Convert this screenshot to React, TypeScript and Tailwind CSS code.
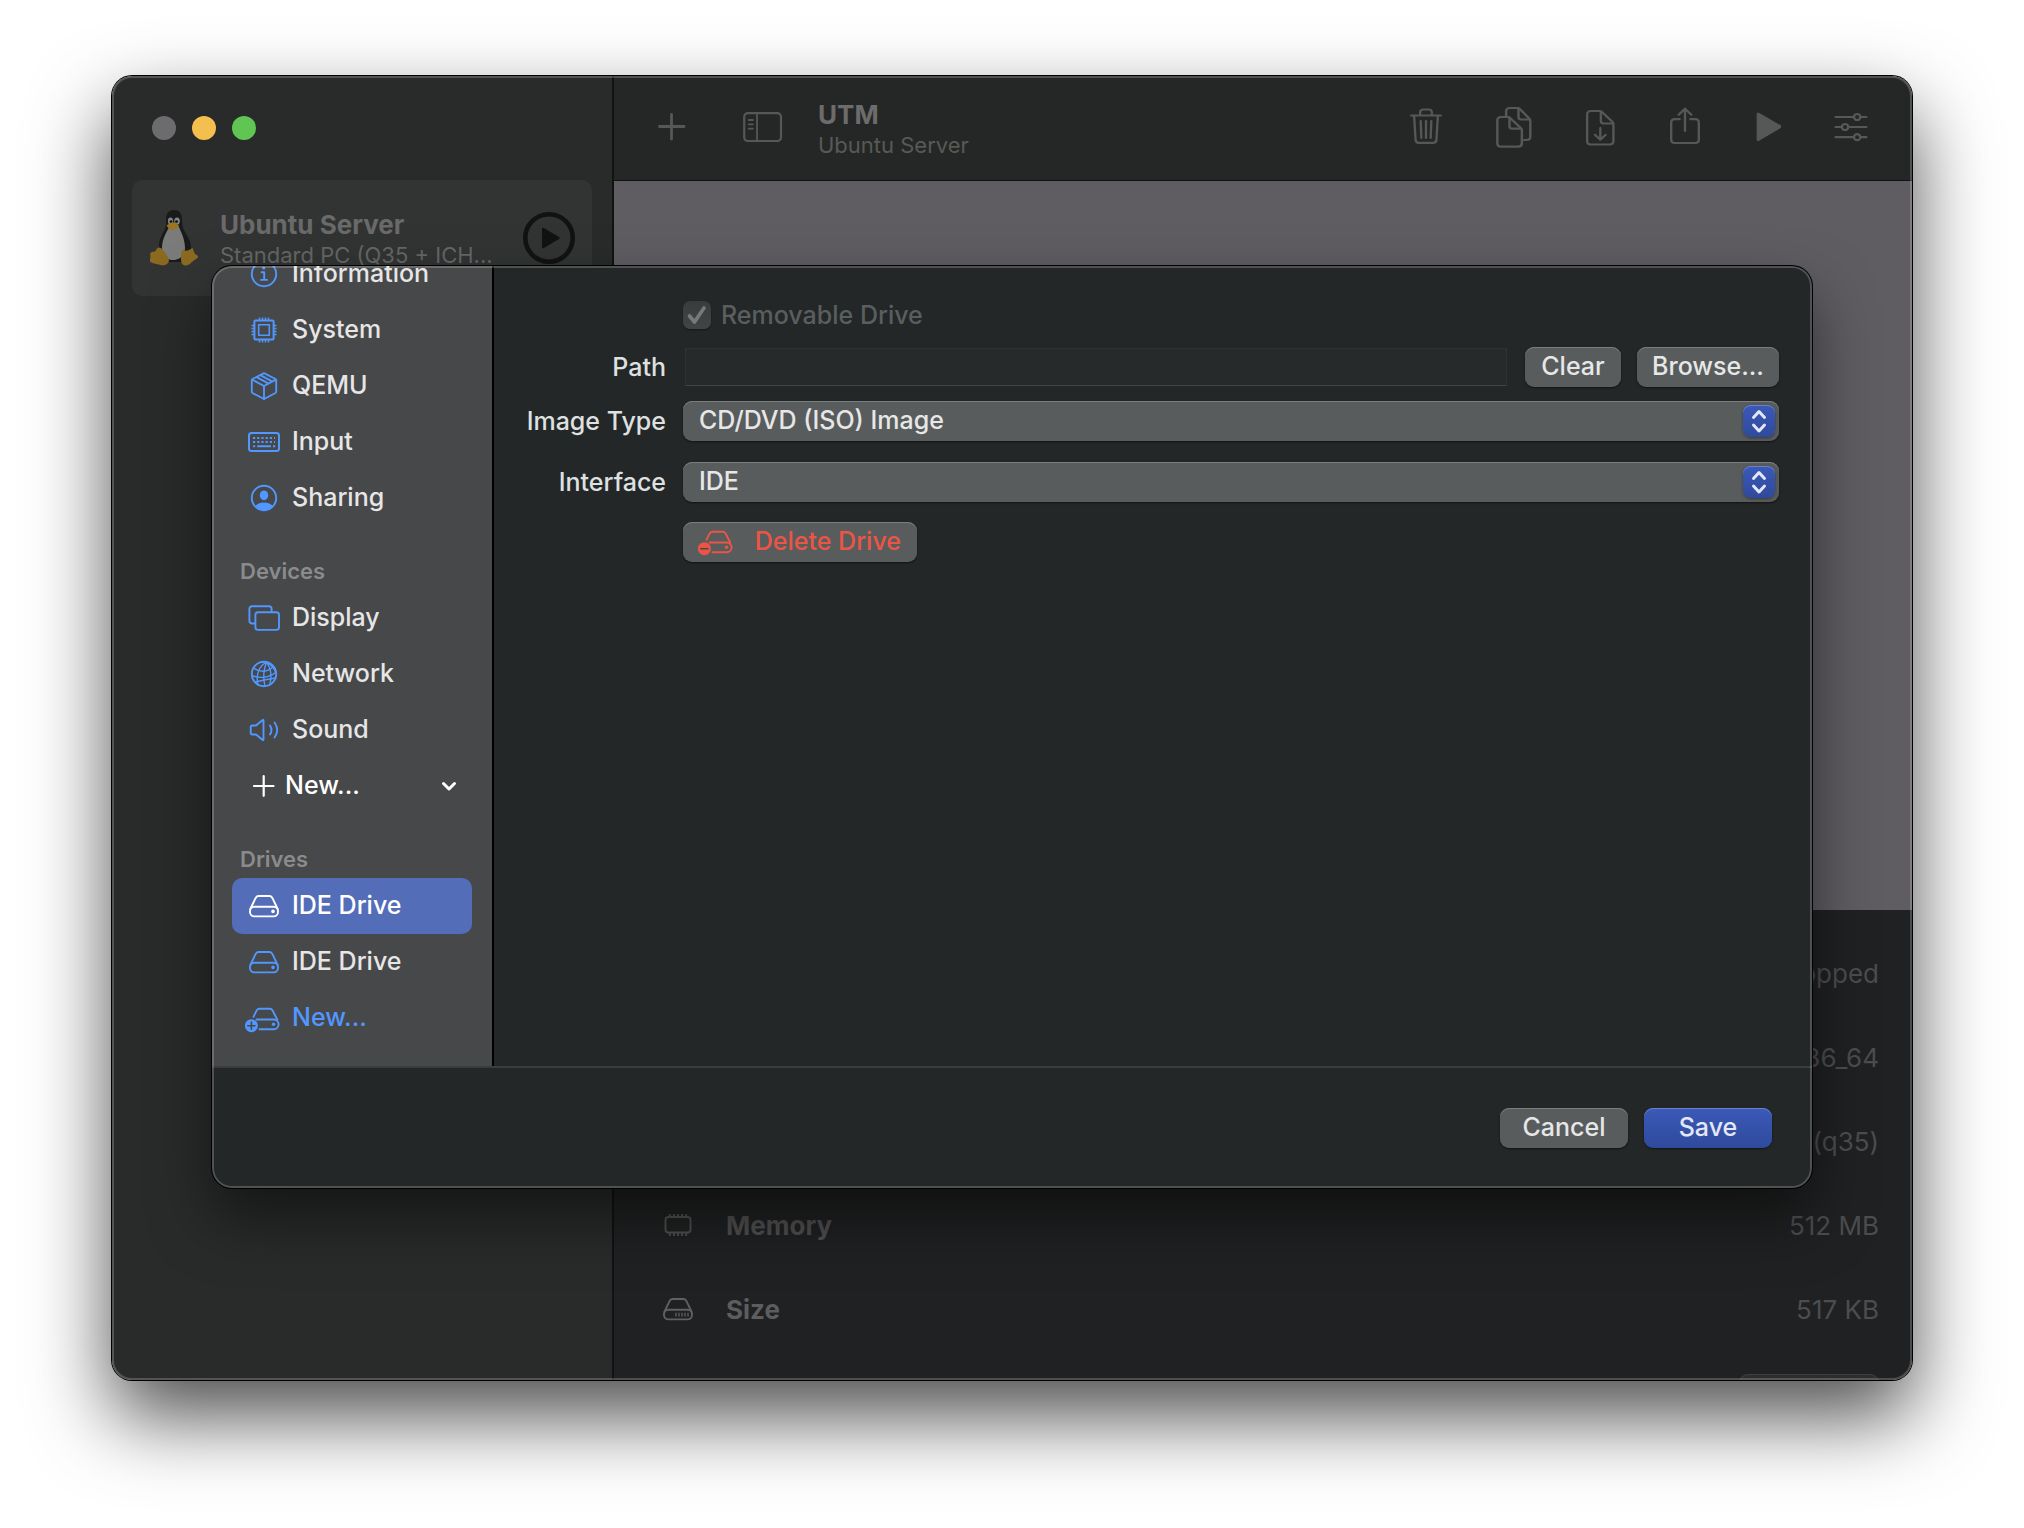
import { useState } from "react";
import type { ReactNode } from "react";

function Glyph({ children, className = "" }: { children: ReactNode; className?: string }) {
  return (
    <svg
      viewBox="0 0 36 32"
      className={`h-8 w-9 shrink-0 overflow-visible ${className}`}
      fill="none"
      stroke="currentColor"
      strokeWidth={1.9}
      strokeLinecap="round"
      strokeLinejoin="round"
      aria-hidden="true"
    >
      {children}
    </svg>
  );
}

function InfoIcon() {
  return (
    <Glyph className="text-[#5197ff]">
      <circle cx="18" cy="16" r="12.2" />
      <circle cx="17.7" cy="10" r="1.6" fill="currentColor" stroke="none" />
      <path d="M15.6 14.2h2.6v7.6M15 21.9h6.2" />
    </Glyph>
  );
}

function ChipIcon() {
  return (
    <Glyph className="text-[#5197ff]">
      <rect x="8.4" y="6.4" width="19.2" height="19.2" rx="1" strokeWidth={2} />
      <rect x="12.7" y="10.7" width="10.6" height="10.6" strokeWidth={1.6} />
      <path
        d="M13.5 3.5v3M16.5 3.5v3M19.5 3.5v3M22.5 3.5v3M13.5 25.5v3M16.5 25.5v3M19.5 25.5v3M22.5 25.5v3M5.5 11.5h3M5.5 14.5h3M5.5 17.5h3M5.5 20.5h3M27.5 11.5h3M27.5 14.5h3M27.5 17.5h3M27.5 20.5h3"
        strokeWidth={1.5}
        strokeLinecap="butt"
      />
    </Glyph>
  );
}

function BoxIcon() {
  return (
    <Glyph className="text-[#5197ff]">
      <path d="M18 3.2 29.5 9q.7.4.7 1.2v11.6q0 .8-.7 1.2L18 29 6.5 23q-.7-.4-.7-1.2V10.2q0-.8.7-1.2Z" />
      <path d="M6.2 9.7 18 16l11.8-6.3M18 16v13M10.6 7.2l11.6 6.2M14.4 5.2l11.6 6.2" />
    </Glyph>
  );
}

function KeyboardIcon() {
  return (
    <Glyph className="text-[#5197ff]">
      <rect x="3" y="7" width="30" height="18" rx="2.5" strokeWidth={2} />
      <path d="M7 12h22M7 16h22" strokeWidth={2} strokeDasharray="2.2 2" strokeLinecap="butt" />
      <path d="M7 20.2h2.2M11.2 20.2h13.8M27 20.2h2.2" strokeWidth={2} strokeLinecap="butt" />
    </Glyph>
  );
}

function PersonIcon() {
  return (
    <Glyph className="text-[#5197ff]">
      <circle cx="18" cy="16" r="12.2" />
      <ellipse cx="18" cy="13.3" rx="4.2" ry="4.9" fill="currentColor" stroke="none" />
      <path d="M9 24.5c1.8-2.6 5-4 9-4s7.2 1.4 9 4a12.2 12.2 0 0 1-18 0Z" fill="currentColor" stroke="none" />
    </Glyph>
  );
}

function DisplayIcon() {
  return (
    <Glyph className="text-[#5197ff]">
      <path d="M8.5 21.5H6a2.6 2.6 0 0 1-2.6-2.6V6.8A2.6 2.6 0 0 1 6 4.2h17a2.6 2.6 0 0 1 2.6 2.6v2.8" />
      <rect x="9.4" y="10.3" width="23.6" height="17.6" rx="2.6" />
    </Glyph>
  );
}

function GlobeIcon() {
  return (
    <Glyph className="text-[#5197ff]">
      <circle cx="18" cy="16" r="12.2" />
      <g strokeWidth={1.4}>
        <path d="M20.5 4.2C13 8 9.5 17 12 26.6M20.5 4.2c-3.2 8-3.600 16-1.5 24M20.5 4.2c4.5 6 5.5 13.5 3.5 22M20.5 4.2c4 2.2 7.5 6 9.3 10" />
        <path d="M7.500 10c6 4.500 14 4.700 20-1.500M6 17.500c7 3.200 17 2.500 24-3.500M9 24c6-1.500 13-3 20.500-4" />
      </g>
    </Glyph>
  );
}

function SoundIcon() {
  return (
    <Glyph className="text-[#5197ff]">
      <path d="M17.500 6.300v19.400q0 .8-.8.300L10 20.500H6.500a1.800 1.800 0 0 1-1.800-1.800v-5.400a1.800 1.800 0 0 1 1.800-1.800H10L16.700 6q.8-.5.800.3Z" />
      <path d="M24 11.500c1.800 2.800 1.800 6.200 0 9M28.600 8.500c3.200 4.600 3.200 10.400 0 15" />
    </Glyph>
  );
}

function DriveIcon({ className, vents }: { className: string; vents?: boolean }) {
  return (
    <Glyph className={className}>
      <path d="M4.300 19 9.800 7.700Q10.800 6 12.600 6h10.800q1.800 0 2.800 1.700L31.700 19" />
      <rect x="4" y="16.800" width="28" height="9.600" rx="4.300" />
      {vents ? (
        <path d="M16 19.800v3.800M19 19.800v3.800M22 19.800v3.800M25 19.800v3.800M28 19.800v3.800" strokeWidth={1.3} strokeLinecap="butt" />
      ) : (
        <circle cx="27" cy="21.400" r="1.800" fill="currentColor" stroke="none" />
      )}
    </Glyph>
  );
}

function DriveBadgeIcon({ className, sign }: { className: string; sign: "plus" | "minus" }) {
  return (
    <Glyph className={className}>
      <path d="M7.500 14.800 10.800 8.200Q11.800 6.800 13.400 6.800h10.400q1.800 0 2.800 1.700l4.600 9" />
      <path d="M10.500 17.500h17.300a4.700 4.700 0 0 1 0 9.700H13.500" />
      <circle cx="27.500" cy="22.200" r="1.700" fill="currentColor" stroke="none" />
      <circle cx="5.400" cy="23.700" r="6.500" fill="currentColor" stroke="none" />
      <path
        d={sign === "plus" ? "M1.800 23.700h7.200M5.400 20.100v7.200" : "M1.800 23.700h7.200"}
        stroke="#474849"
        strokeWidth={1.6}
      />
    </Glyph>
  );
}

function MemoryIcon() {
  return (
    <Glyph className="text-[#505051]">
      <rect x="5.500" y="8" width="25" height="15.500" rx="3" />
      <path
        d="M9.800 5v3M13.900 5v3M18 5v3M22.100 5v3M26.200 5v3M9.800 24v3M13.900 24v3M18 24v3M22.100 24v3M26.200 24v3"
        strokeLinecap="butt"
      />
    </Glyph>
  );
}

function Tux() {
  return (
    <svg viewBox="0 0 48 56" className="h-14 w-12 shrink-0" aria-hidden="true">
      <path
        d="M24 0c-5.500 0-8 4-8 9 0 5 .5 8-2 12-3 5-4.500 9-5 14-.5 6 3 14 8 17h14c6-3 10-8 10-14 0-6-3-11-6-16-2.500-4-3-8-3-13 0-5-2.500-9-8-9Z"
        fill="#191a1a"
      />
      <path d="M19 17c-1.500 4-7 11-7 21 0 7 4 12 11 12s12-5 12-12c0-9-4-16-6-21-2-3-8-3-10 0Z" fill="#7b7b7b" />
      <ellipse cx="20.500" cy="11" rx="2.600" ry="3.500" fill="#858585" />
      <ellipse cx="27" cy="11" rx="2.800" ry="3.500" fill="#858585" />
      <circle cx="21" cy="11.600" r="1.400" fill="#111" />
      <circle cx="26.500" cy="11.600" r="1.400" fill="#111" />
      <path d="M16.500 15.500c2-1.500 4-3 6.500-3s5 1.500 6 3c-1.500 2.500-4 4.500-6.500 4.500s-4.500-2-6-4.500Z" fill="#9a7422" />
      <path
        d="M9 37.500c3 0 5 4 7.500 7.500 2.500 3 3.500 6 1 8.500-3 3-7.500 1.500-11 .5-3-1-6-1-6.500-3-.5-1.500.8-3 .3-5.500C-.2 42 2 42 4.500 41.500 6.500 41 6.500 37.500 9 37.500Z"
        fill="#8b6a20"
      />
      <path
        d="M33 39.500c-2 1.500-2 6-2 9.500 0 4 1.500 6.500 4.500 6.500 4 0 6-3.500 9-5.500 2-1.200 3.700-2 3.500-3.500-.3-1.500-3-2-4-4.500-.7-2-1-4-2-4-1.500 2-7 4-9 1.500Z"
        fill="#8b6a20"
      />
    </svg>
  );
}

const toolbarActions: { label: string; width: string; box: string; art: ReactNode }[] = [
  {
    label: "Delete",
    width: "w-[34px]",
    box: "0 0 32 42",
    art: (
      <>
        <path d="M2 9.500h28M4.800 9.500l1.400 24.400q.2 3 3.200 3h13.200q3 0 3.200-3l1.400-24.400" />
        <path d="M10.500 9V6.300q0-2.800 2.800-2.800h5.400q2.800 0 2.800 2.800V9M11 15l.6 17M16 15v17M21 15l-.6 17" />
      </>
    ),
  },
  {
    label: "Clone",
    width: "w-9",
    box: "0 0 32 42",
    art: (
      <>
        <path d="M9 10V5.500Q9 2 12.500 2H19q1.300 0 2.200 1l8.300 9.500q1 1 1 2.500v15.500q0 3.500-3.500 3.500h-2" />
        <path d="M20 2.500v8.600q0 2.400 2.400 2.400h7.600" />
        <path d="M1.200 14.500Q1.200 11 4.700 11h5.600q1.300 0 2.200 1l9.500 10q1 1 1 2.500v13q0 3.200-3.500 3.200H4.700q-3.500 0-3.500-3.500Z" />
        <path d="M12 11.500v8.800q0 2.400 2.400 2.400h8" />
      </>
    ),
  },
  {
    label: "Export",
    width: "w-[30px]",
    box: "0 0 28 42",
    art: (
      <>
        <path d="M2 8.500Q2 5 5.500 5h8q1.300 0 2.300 1l9.700 9.700q1 1 1 2.300v17q0 3.500-3.500 3.500H5.500q-3.500 0-3.500-3.500Z" />
        <path d="M14.800 5.500v9.600q0 2.400 2.400 2.400h9M14.300 22v11.500M9.300 28.800l5 4.900 5-4.900" />
      </>
    ),
  },
  {
    label: "Share",
    width: "w-[34px]",
    box: "0 0 32 42",
    art: (
      <>
        <path d="M11 13.200H6.500q-3.500 0-3.500 3.500v17Q3 37 6.500 37h19q3.500 0 3.500-3.300v-17q0-3.500-3.500-3.500H21" />
        <path d="M16 25V3M10 8.700l6-6 6 6" />
      </>
    ),
  },
  {
    label: "Run",
    width: "w-[26px]",
    box: "0 0 24 42",
    art: <path d="M2 8.500q0-2 1.800-1L23 19.500q1.800 1.200 0 2.400L3.800 34.200q-1.800 1-1.800-1Z" fill="currentColor" strokeWidth={1} />,
  },
  {
    label: "Edit settings",
    width: "w-[34px]",
    box: "0 0 32 42",
    art: (
      <>
        <path d="M1.500 11h17M25 11h5.500M1.500 21h5.800M13.500 21h17M1.500 31.200h17M25 31.200h5.500" />
        <circle cx="21.800" cy="11" r="3" />
        <circle cx="10.400" cy="21" r="3" />
        <circle cx="21.800" cy="31.200" r="3" />
      </>
    ),
  },
];

const generalItems = [
  { label: "Information", icon: <InfoIcon /> },
  { label: "System", icon: <ChipIcon /> },
  { label: "QEMU", icon: <BoxIcon /> },
  { label: "Input", icon: <KeyboardIcon /> },
  { label: "Sharing", icon: <PersonIcon /> },
];

const deviceItems = [
  { label: "Display", icon: <DisplayIcon /> },
  { label: "Network", icon: <GlobeIcon /> },
  { label: "Sound", icon: <SoundIcon /> },
];

const details: { label?: string; icon?: ReactNode; value: string }[] = [
  { value: "Stopped" },
  { value: "x86_64" },
  { value: "(q35)" },
  { label: "Memory", icon: <MemoryIcon />, value: "512 MB" },
  { label: "Size", icon: <DriveIcon className="text-[#606162]" vents />, value: "517 KB" },
];

const grayButton =
  "h-10 rounded-[9px] bg-[#595c5d] pb-0.5 text-[25px] leading-8 font-medium text-[#e6e7e7] shadow-[inset_0_1px_0_#7b7e7f,0_1px_2px_rgba(0,0,0,0.5)]";

function NavItem({ icon, label, selected }: { icon: ReactNode; label: string; selected?: boolean }) {
  return (
    <li>
      <button
        aria-current={selected ? "page" : undefined}
        className={`flex h-14 w-full items-center gap-[10px] rounded-[10px] pl-[14px] text-left text-[25px] font-medium ${
          selected ? "bg-[#546db9] text-white" : "text-[#e6e6e7]"
        }`}
      >
        {icon}
        {label}
      </button>
    </li>
  );
}

function NavHeading({ children }: { children: ReactNode }) {
  return (
    <h2 className="flex h-16 shrink-0 items-end pb-[5px] pl-2 text-[22px] leading-7 font-semibold text-[#8a8b8c]">
      {children}
    </h2>
  );
}

function SettingsNav() {
  return (
    <nav
      aria-label="Settings"
      className="flex w-[282px] shrink-0 flex-col justify-end overflow-hidden border-r-2 border-black bg-[#474849] px-5 pb-5"
    >
      <ul>
        {generalItems.map((item) => (
          <NavItem key={item.label} {...item} />
        ))}
      </ul>
      <NavHeading>Devices</NavHeading>
      <ul>
        {deviceItems.map((item) => (
          <NavItem key={item.label} {...item} />
        ))}
        <li>
          <button className="flex h-14 w-full items-center gap-[3px] pr-[15px] pl-[14px] text-left text-[25px] font-medium text-white">
            <Glyph>
              <path d="M8 16h19.500M17.700 6.200v19.600" strokeWidth={2.200} />
            </Glyph>
            <span className="flex-1">New...</span>
            <svg viewBox="0 0 16 16" className="h-4 w-4" fill="none" stroke="currentColor" strokeWidth={3} strokeLinecap="round" strokeLinejoin="round" aria-hidden="true">
              <path d="m2.500 5.500 5.500 5.500 5.500-5.500" />
            </svg>
          </button>
        </li>
      </ul>
      <NavHeading>Drives</NavHeading>
      <ul>
        <NavItem icon={<DriveIcon className="text-white" />} label="IDE Drive" selected />
        <NavItem icon={<DriveIcon className="text-[#5197ff]" />} label="IDE Drive" />
        <li>
          <button className="flex h-14 w-full items-center gap-[10px] pl-[14px] text-left text-[25px] font-medium text-[#5197ff]">
            <DriveBadgeIcon className="text-[#5197ff]" sign="plus" />
            New...
          </button>
        </li>
      </ul>
    </nav>
  );
}

function PopUp({
  id,
  value,
  options,
  onChange,
}: {
  id: string;
  value: string;
  options: string[];
  onChange: (value: string) => void;
}) {
  return (
    <div className="relative">
      <select
        id={id}
        value={value}
        onChange={(e) => onChange(e.target.value)}
        className={`${grayButton} block w-full appearance-none px-4`}
      >
        {options.map((option) => (
          <option key={option}>{option}</option>
        ))}
      </select>
      <span className="pointer-events-none absolute top-1 right-1 flex h-8 w-8 items-center justify-center rounded-[8px] bg-linear-to-b from-[#3b59b8] to-[#2f4a9c] shadow-[inset_0_1px_0_#6a82cc,0_1px_3px_rgba(0,0,0,0.4)]">
        <svg viewBox="0 0 32 32" className="h-8 w-8" fill="none" stroke="#e3e7f5" strokeWidth={3} strokeLinecap="round" strokeLinejoin="round" aria-hidden="true">
          <path d="m10.500 12.500 5.500-6 5.500 6M10.500 20l5.500 6 5.500-6" />
        </svg>
      </span>
    </div>
  );
}

function DriveForm() {
  const [path, setPath] = useState("");
  const [imageType, setImageType] = useState("CD/DVD (ISO) Image");
  const [bus, setBus] = useState("IDE");

  const row = "grid grid-cols-[172px_1fr] items-center gap-x-[17px]";
  const labelStyle = "text-right text-[25px] leading-8 font-medium text-[#dfe0e0]";

  return (
    <form className="min-w-0 flex-1 pt-[35px] pr-[33px]" onSubmit={(e) => e.preventDefault()}>
      <div className={row}>
        <div className="relative col-start-2 flex h-7 items-center gap-[10px]">
          <input
            id="removable"
            type="checkbox"
            checked
            disabled
            readOnly
            className="h-7 w-7 appearance-none rounded-[7px] bg-linear-to-b from-[#393c3d] to-[#424546] shadow-[0_1px_2px_rgba(0,0,0,0.4)]"
          />
          <svg viewBox="0 0 28 28" className="pointer-events-none absolute top-0 left-0 h-7 w-7" fill="none" stroke="#777a7a" strokeWidth={3.6} strokeLinecap="round" strokeLinejoin="round" aria-hidden="true">
            <path d="m6.500 15 5 6L21 7" />
          </svg>
          <label htmlFor="removable" className="text-[25px] leading-7 font-medium text-[#5b5e5f]">
            Removable Drive
          </label>
        </div>
      </div>

      <div className={`${row} mt-[18px]`}>
        <label htmlFor="path" className={labelStyle}>
          Path
        </label>
        <div className="flex items-center pl-0.5">
          <input
            id="path"
            value={path}
            onChange={(e) => setPath(e.target.value)}
            className="h-[38px] min-w-0 flex-1 border border-[#2f3233] border-b-[#414445] bg-[#272a2b] px-2 text-[25px] text-[#dfe0e0]"
          />
          <button type="button" onClick={() => setPath("")} className={`${grayButton} ml-[18px] w-24`}>
            Clear
          </button>
          <button type="button" className={`${grayButton} ml-4 w-[142px]`}>
            Browse...
          </button>
        </div>
      </div>

      <div className={`${row} mt-[14px]`}>
        <label htmlFor="image-type" className={labelStyle}>
          Image Type
        </label>
        <PopUp
          id="image-type"
          value={imageType}
          options={["CD/DVD (ISO) Image", "Disk Image"]}
          onChange={setImageType}
        />
      </div>

      <div className={`${row} mt-[21px]`}>
        <label htmlFor="interface" className={labelStyle}>
          Interface
        </label>
        <PopUp id="interface" value={bus} options={["IDE", "SCSI", "VirtIO", "USB"]} onChange={setBus} />
      </div>

      <div className={`${row} mt-5`}>
        <button
          type="button"
          className={`${grayButton} col-start-2 flex w-[234px] items-center justify-between justify-self-start px-4`}
        >
          <DriveBadgeIcon className="text-[#ec5545]" sign="minus" />
          <span className="text-[#ec5545]">Delete Drive</span>
        </button>
      </div>
    </form>
  );
}

function SettingsSheet() {
  return (
    <section
      role="dialog"
      aria-label="Virtual machine settings"
      className="absolute inset-x-[100px] top-[190px] overflow-hidden rounded-[20px] bg-[#232728] shadow-[0_0_0_1px_#000,0_30px_60px_rgba(0,0,0,0.5)]"
    >
      <div className="flex h-[800px]">
        <SettingsNav />
        <DriveForm />
      </div>
      <footer className="flex justify-end gap-4 border-t-2 border-[#393d3e] p-10">
        <button className={`${grayButton} w-32`}>Cancel</button>
        <button className="h-10 w-32 rounded-[9px] bg-linear-to-b from-[#3b59b8] to-[#2f4a9c] pb-0.5 text-[25px] leading-8 font-medium text-[#e3e7f5] shadow-[inset_0_1px_0_#6a82cc,0_1px_2px_rgba(0,0,0,0.5)]">
          Save
        </button>
      </footer>
      <div className="pointer-events-none absolute inset-0 rounded-[20px] border-2 border-white/20" />
    </section>
  );
}

function Sidebar() {
  return (
    <aside className="w-[502px] shrink-0 border-r-2 border-[#111212] bg-[#292b2a]">
      <div className="flex gap-4 pt-10 pl-10">
        <button aria-label="Close" className="h-6 w-6 rounded-full bg-[#6c6c6e]" />
        <button aria-label="Minimize" className="h-6 w-6 rounded-full bg-[#f5bf4f]" />
        <button aria-label="Zoom" className="h-6 w-6 rounded-full bg-[#61c554]" />
      </div>
      <div className="mx-5 mt-10 flex h-[116px] items-center rounded-[10px] bg-[#323333] pr-[17px] pl-[18px]">
        <Tux />
        <div className="ml-[22px] min-w-0 flex-1 pt-1.5 whitespace-nowrap">
          <div className="text-[26px] leading-7 font-bold text-[#6a6a6a]">Ubuntu Server</div>
          <div className="text-[22px] leading-8 text-[#656666]">Standard PC (Q35 + ICH...</div>
        </div>
        <button aria-label="Run Ubuntu Server">
          <svg viewBox="0 0 52 52" className="h-13 w-13" aria-hidden="true">
            <circle cx="26" cy="26" r="23.700" fill="none" stroke="#111212" strokeWidth={4.600} />
            <path d="M19 17.200q0-2 1.800-1.200L36 25q1.600 1 0 2L20.800 36q-1.800.8-1.800-1.200Z" fill="#111212" />
          </svg>
        </button>
      </div>
    </aside>
  );
}

function Toolbar() {
  return (
    <header className="flex h-[105px] items-center border-b border-[#101111] bg-[#252726] pr-[44px] pb-0.5 pl-[44px] text-[#565857]">
      <button aria-label="New virtual machine">
        <svg viewBox="0 0 28 28" className="h-7 w-7" fill="none" stroke="currentColor" strokeWidth={2.8} strokeLinecap="round" aria-hidden="true">
          <path d="M1.500 13.500h24.500M13.500 1.500v24.500" />
        </svg>
      </button>
      <button aria-label="Toggle sidebar" className="ml-[57px]">
        <svg viewBox="0 0 40 30" className="h-[30px] w-10" fill="none" stroke="currentColor" strokeWidth={2.2} strokeLinecap="round" aria-hidden="true">
          <rect x="1.200" y="1.200" width="36.800" height="27.800" rx="3.800" />
          <path d="M14 1.500v27M5.700 8h4.200M5.700 12.300h4.200M5.700 16.600h4.200" strokeWidth={1.8} />
        </svg>
      </button>
      <div className="ml-[35px] flex-1 pt-2 whitespace-nowrap">
        <h1 className="text-[26px] leading-7 font-bold text-[#6b6c6b]">UTM</h1>
        <p className="text-[22px] leading-8 text-[#575957]">Ubuntu Server</p>
      </div>
      <div className="flex items-center gap-[53px]">
        {toolbarActions.map((action) => (
          <button key={action.label} aria-label={action.label}>
            <svg
              viewBox={action.box}
              preserveAspectRatio="none"
              className={`h-[42px] ${action.width}`}
              fill="none"
              stroke="currentColor"
              strokeWidth={2.2}
              strokeLinecap="round"
              strokeLinejoin="round"
              aria-hidden="true"
            >
              {action.art}
            </svg>
          </button>
        ))}
      </div>
    </header>
  );
}

function Details() {
  return (
    <div className="h-[470px] overflow-hidden bg-[#202122] pt-[21px] pr-[33px] pl-[46px] text-[26px]">
      <dl>
        {details.map((item) => (
          <div key={item.value} className="flex h-21 items-center">
            {item.label && (
              <dt className={`flex items-center gap-[30px] font-bold ${item.label === "Size" ? "text-[#5c5d5e]" : "text-[#505051]"}`}>
                {item.icon}
                {item.label}
              </dt>
            )}
            <dd className="ml-auto text-[#4c4d4e]">{item.value}</dd>
          </div>
        ))}
      </dl>
      <button
        aria-label="Browse shared directory"
        className="mt-[23px] ml-auto block h-10 w-[140px] rounded-[9px] bg-[#2c2d2e] shadow-[inset_0_1px_0_#3e3f40]"
      />
    </div>
  );
}

export default function App() {
  return (
    <div className="min-h-screen bg-white px-28 pt-[76px] pb-[148px] font-['Inter','Liberation_Sans',sans-serif]">
      <main className="relative flex overflow-hidden rounded-[20px] shadow-[0_0_0_1px_#000,0_36px_80px_rgba(0,0,0,0.7)]">
        <Sidebar />
        <div className="min-w-0 flex-1">
          <Toolbar />
          <div className="h-[729px] bg-[#5f5d62]" />
          <Details />
        </div>
        <SettingsSheet />
        <div className="pointer-events-none absolute inset-0 rounded-[20px] border-2 border-white/20" />
      </main>
    </div>
  );
}
